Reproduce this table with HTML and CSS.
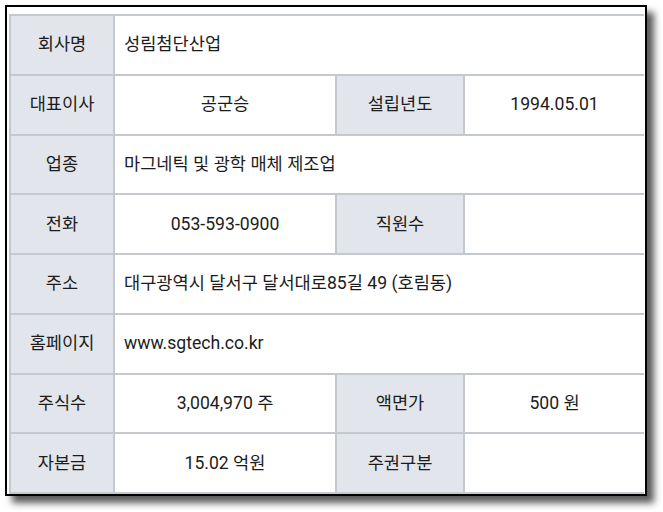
FILE: index.html
```html
<!DOCTYPE html>
<html lang="ko">
<head>
<meta charset="utf-8">
<link rel="stylesheet" href="styles.css">
</head>
<body>
<div class="frame">
  <table class="info">
    <colgroup>
      <col class="c1"><col class="c2"><col class="c3"><col class="c4">
    </colgroup>
    <tr><th>회사명</th><td class="left" colspan="3">성림첨단산업</td></tr>
    <tr><th>대표이사</th><td>공군승</td><th>설립년도</th><td>1994.05.01</td></tr>
    <tr><th>업종</th><td class="left" colspan="3">마그네틱 및 광학 매체 제조업</td></tr>
    <tr><th>전화</th><td>053-593-0900</td><th>직원수</th><td></td></tr>
    <tr><th>주소</th><td class="left" colspan="3">대구광역시 달서구 달서대로85길 49 (호림동)</td></tr>
    <tr><th>홈페이지</th><td class="left" colspan="3">www.sgtech.co.kr</td></tr>
    <tr><th>주식수</th><td>3,004,970 주</td><th>액면가</th><td>500 원</td></tr>
    <tr><th>자본금</th><td>15.02 억원</td><th>주권구분</th><td></td></tr>
  </table>
</div>
</body>
</html>
```
FILE: styles.css
```css
html, body {
  margin: 0;
  padding: 0;
  background: #ffffff;
}
body {
  width: 663px;
  height: 512px;
  overflow: hidden;
  font-family: Roboto, "Noto Sans CJK KR", sans-serif;
}
.frame {
  margin: 5px 0 0 5px;
  border: 2px solid #000;
  background: #fff;
  box-shadow: 7px 7px 7px rgba(0, 0, 0, 0.65);
  padding: 7px 0 0 2px;
  box-sizing: content-box;
  width: 636px;
  height: 480px;
}
.info {
  border-collapse: collapse;
  width: 634px;
  table-layout: fixed;
  font-size: 17.6px;
  color: #1c1c1c;
}
.c1 { width: 104px; }
.c2 { width: 222px; }
.c3 { width: 128px; }
.c4 { width: 180px; }
.info tr { height: 59.75px; }
.info th, .info td {
  border: 2px solid #c4c9ce;
  padding: 0;
  text-align: center;
  vertical-align: middle;
  font-weight: 400;
  line-height: 1.2;
}
.info tr > :last-child { border-right: none; }
.info th {
  background: #e2e6ec;
}
.info td.left {
  text-align: left;
  padding-left: 9px;
}
```
